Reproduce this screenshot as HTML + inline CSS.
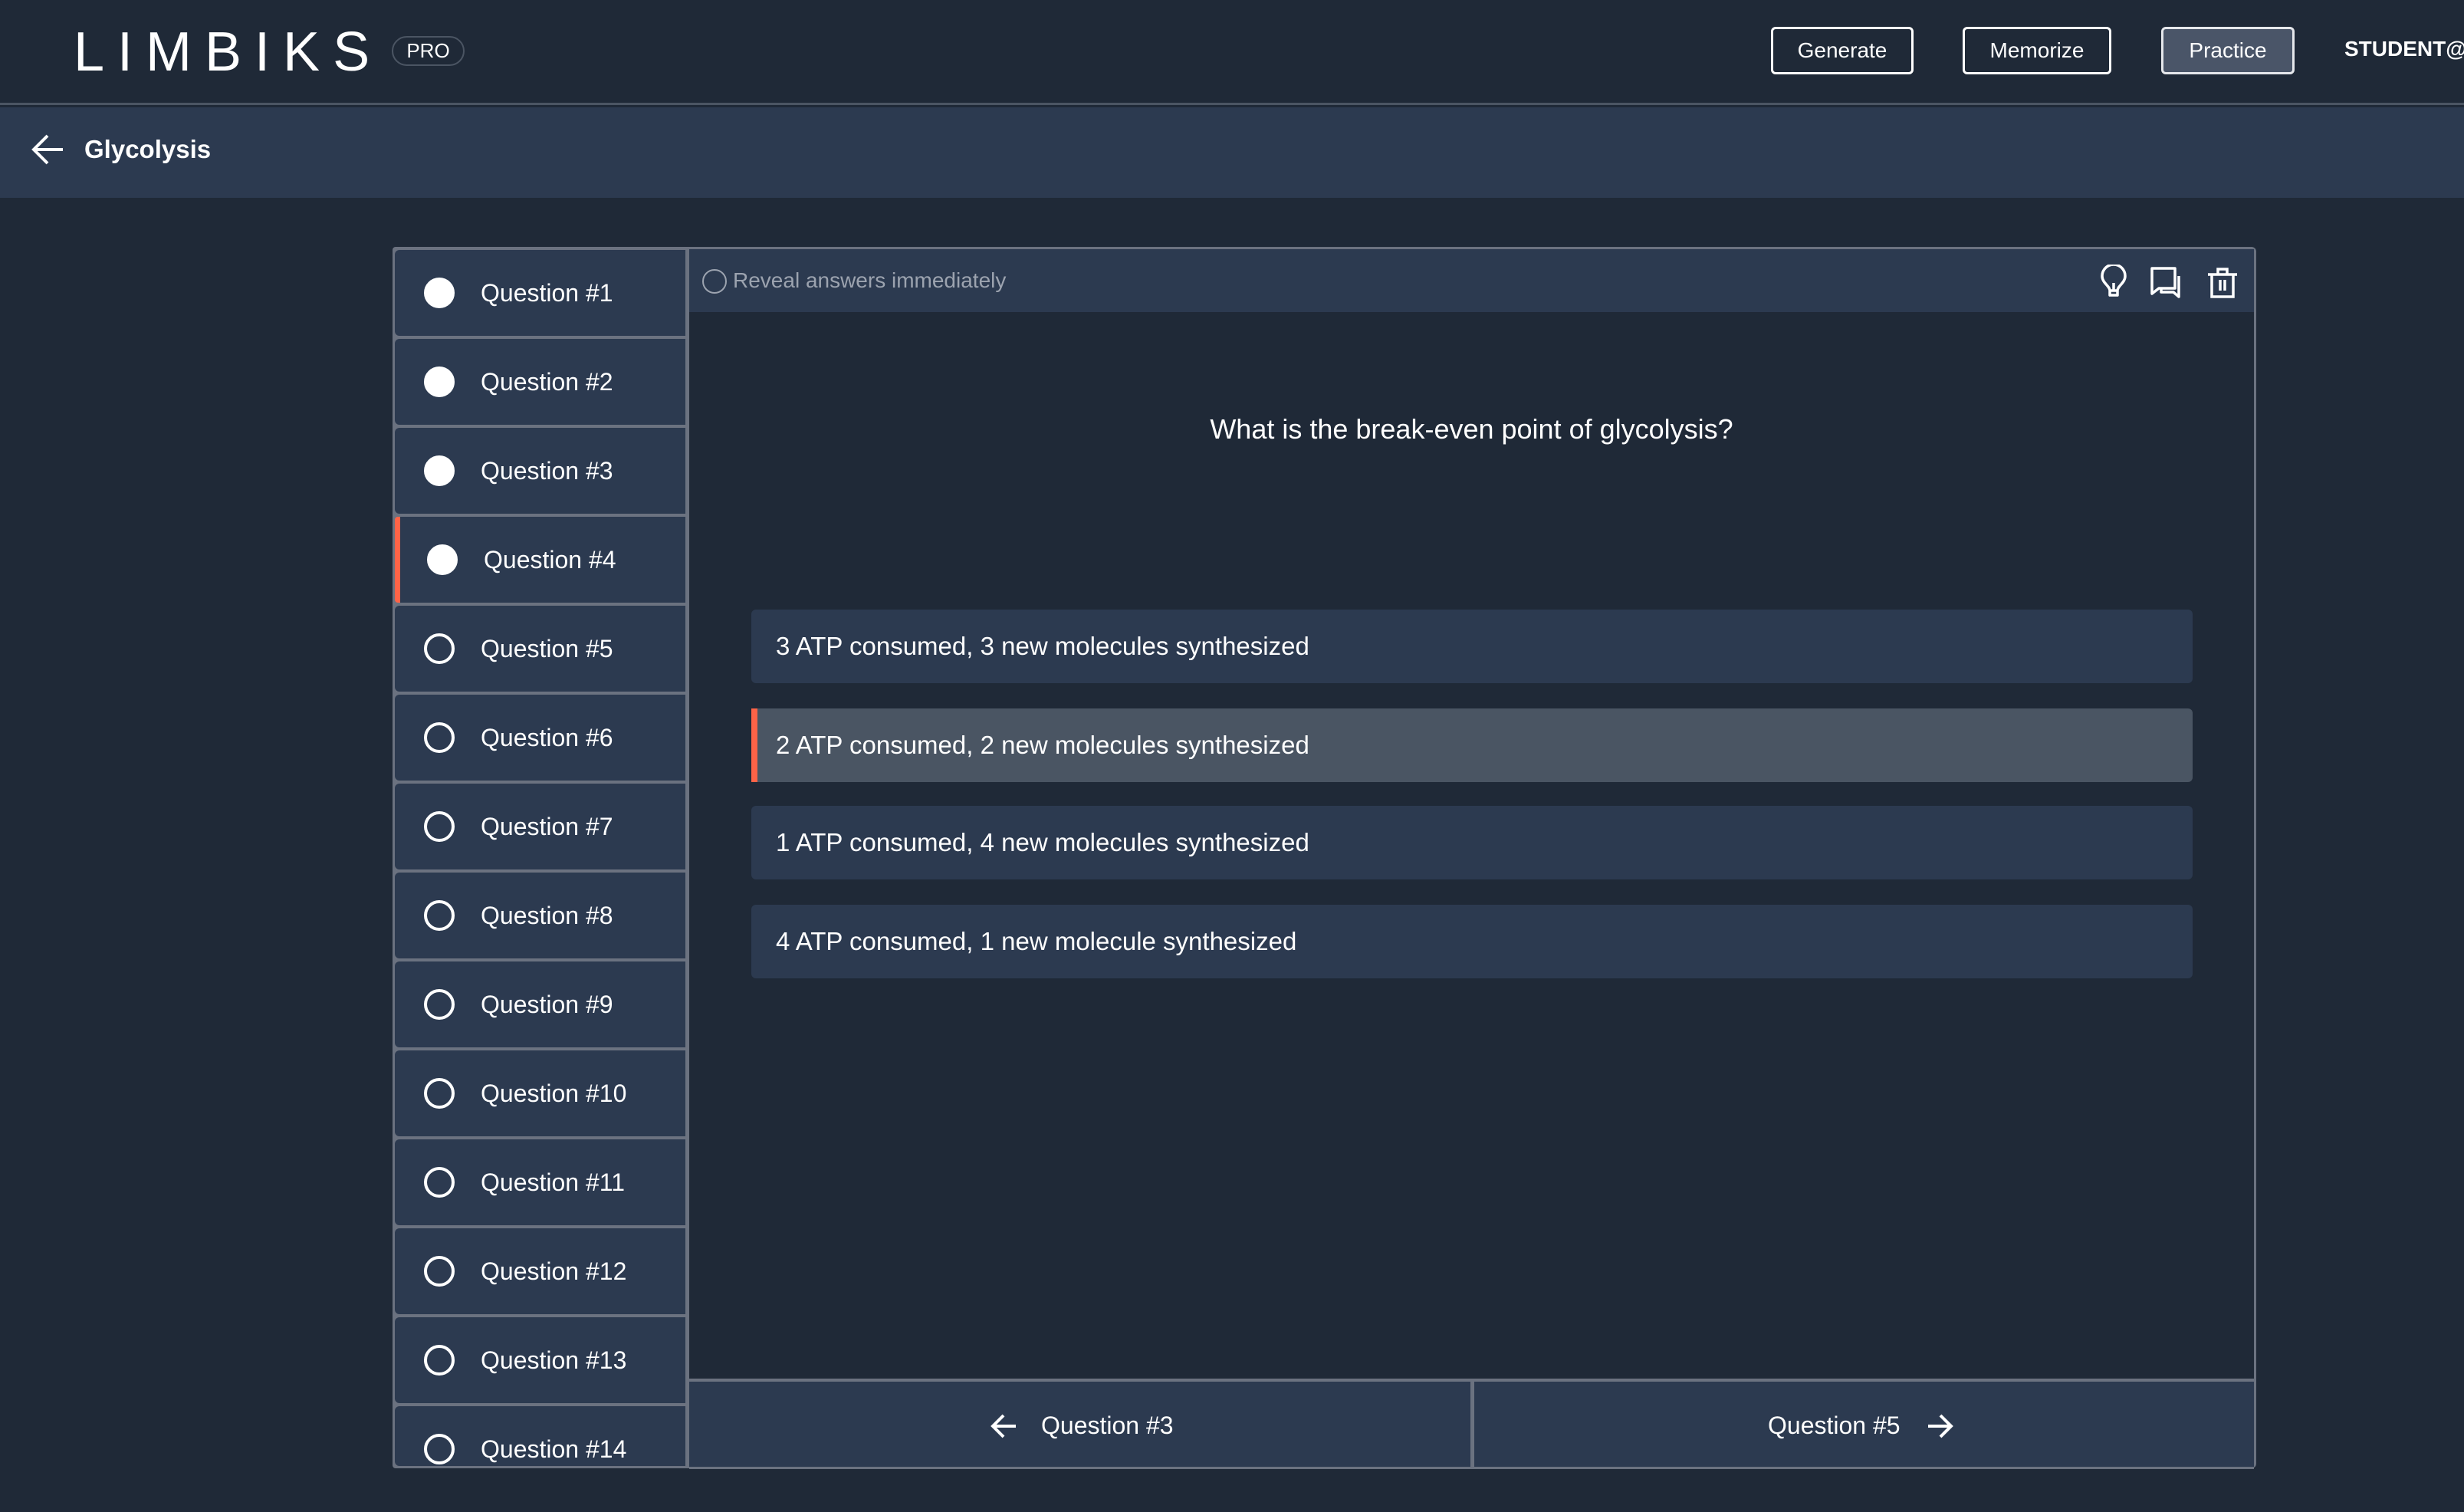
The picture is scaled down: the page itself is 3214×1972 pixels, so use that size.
<!DOCTYPE html>
<html><head><meta charset="utf-8"><style>
*{margin:0;padding:0;box-sizing:border-box}
body{width:3214px;height:1972px;background:#1f2937;font-family:"Liberation Sans",sans-serif;color:#fff;position:relative;overflow:hidden}
.a{position:absolute}
.hdr{left:0;top:0;width:3214px;height:137px;background:#1f2937;border-bottom:3px solid #4b5563}
.sub{left:0;top:140px;width:3214px;height:118px;background:#2c3a50}
.btn{position:absolute;top:35px;height:62px;border:3px solid #fff;border-radius:6px;font-size:28px;display:flex;align-items:center;justify-content:center}
.side{left:512px;top:322px;width:387px;height:1593px;background:#6b7280;overflow:hidden;border-radius:4px 0 0 4px}
.it{position:absolute;left:3px;width:379px;height:112px;background:#2c3a50;border-radius:6px 0 0 6px}
.it .c{position:absolute;left:38px;top:36px;width:40px;height:40px;border-radius:50%;border:4px solid #fff}
.it .c.f{background:#fff}
.it span{position:absolute;left:112px;top:38px;font-size:32px;line-height:36px}
.main{left:899px;top:322px;width:2044px;height:1593px;border:3px solid #6b7280;border-left:none;border-radius:0 6px 6px 0;background:#1f2937}
.ans{position:absolute;left:81px;width:1880px;height:96px;background:#2c3a50;border-radius:6px;font-size:33px;line-height:96px;padding-left:32px}
</style></head><body>
<div class="a hdr"></div>
<div class="a" style="left:96px;top:30px;font-size:72px;line-height:76px;letter-spacing:17px;font-weight:300">LIMBIKS</div>
<div class="a" style="left:511px;top:47px;width:95px;height:39px;border:2px solid #4b5563;border-radius:20px;font-size:26px;line-height:35px;text-align:center">PRO</div>
<div class="btn" style="left:2310px;width:186px">Generate</div>
<div class="btn" style="left:2560px;width:194px">Memorize</div>
<div class="btn" style="left:2819px;width:174px;background:#4a5568;border-color:#e5e7eb">Practice</div>
<div class="a" style="left:3058px;top:48px;font-size:28px;font-weight:bold;white-space:nowrap">STUDENT@</div>
<div class="a sub"></div>
<svg class="a" style="left:40px;top:174px" width="44" height="42" viewBox="0 0 44 42"><path d="M42 21H4M22 3L4 21l18 18" fill="none" stroke="#fff" stroke-width="4"/></svg>
<div class="a" style="left:110px;top:176px;font-size:33px;font-weight:bold">Glycolysis</div>

<div class="a side">
<div class="it" style="top:4px"><div class="c f"></div><span>Question #1</span></div>
<div class="it" style="top:120px"><div class="c f"></div><span>Question #2</span></div>
<div class="it" style="top:236px"><div class="c f"></div><span>Question #3</span></div>
<div class="it" style="top:352px;border-left:7px solid #ff6347;border-radius:4px 0 0 4px"><div class="c f" style="left:35px"></div><span style="left:109px">Question #4</span></div>
<div class="it" style="top:468px"><div class="c"></div><span>Question #5</span></div>
<div class="it" style="top:584px"><div class="c"></div><span>Question #6</span></div>
<div class="it" style="top:700px"><div class="c"></div><span>Question #7</span></div>
<div class="it" style="top:816px"><div class="c"></div><span>Question #8</span></div>
<div class="it" style="top:932px"><div class="c"></div><span>Question #9</span></div>
<div class="it" style="top:1048px"><div class="c"></div><span>Question #10</span></div>
<div class="it" style="top:1164px"><div class="c"></div><span>Question #11</span></div>
<div class="it" style="top:1280px"><div class="c"></div><span>Question #12</span></div>
<div class="it" style="top:1396px"><div class="c"></div><span>Question #13</span></div>
<div class="it" style="top:1512px;height:78px"><div class="c"></div><span>Question #14</span></div>
</div>

<div class="a main">
<div class="a" style="left:0;top:0;width:2041px;height:82px;background:#2c3a50"></div>
<div class="a" style="left:17px;top:26px;width:32px;height:32px;border:2px solid #9ca3af;border-radius:50%"></div>
<div class="a" style="left:57px;top:25px;font-size:28px;color:#9ca3af">Reveal answers immediately</div>
<svg class="a" style="left:1838px;top:20px" width="40" height="46" viewBox="0 0 40 46"><path d="M14 40h12M15 34h10v6H15zM20 34v-10M15 34c0-6-10-10-10-19a15 15 0 0130 0c0 9-10 13-10 19" fill="none" stroke="#fff" stroke-width="3.5" stroke-linejoin="round"/></svg>
<svg class="a" style="left:1905px;top:22px" width="46" height="44" viewBox="0 0 46 44"><path d="M3 3h30v26H12l-9 7z" fill="none" stroke="#fff" stroke-width="3.5" stroke-linejoin="round"/><path d="M38 13v27l-7-6H15v-5" fill="none" stroke="#fff" stroke-width="3.5" stroke-linejoin="round"/></svg>
<svg class="a" style="left:1979px;top:24px" width="42" height="40" viewBox="0 0 42 40"><path d="M2 9h38M15 9V2h12v7M7 9v29h28V9M18 16v14M24 16v14" fill="none" stroke="#fff" stroke-width="3.5"/></svg>
<div class="a" style="left:0;top:214px;width:2041px;text-align:center;font-size:36px">What is the break-even point of glycolysis?</div>
<div class="ans" style="top:470px">3 ATP consumed, 3 new molecules synthesized</div>
<div class="ans" style="top:599px;background:#4a5563;border-left:8px solid #ff6347;border-radius:0 6px 6px 0;padding-left:24px">2 ATP consumed, 2 new molecules synthesized</div>
<div class="ans" style="top:726px">1 ATP consumed, 4 new molecules synthesized</div>
<div class="ans" style="top:855px">4 ATP consumed, 1 new molecule synthesized</div>
<div class="a" style="left:0;top:1473px;width:2041px;height:118px;background:#6b7280"></div>
<div class="a" style="left:0;top:1477px;width:1019px;height:111px;background:#2c3a50"></div>
<div class="a" style="left:1024px;top:1477px;width:1017px;height:111px;background:#2c3a50"></div>
<svg class="a" style="left:392px;top:1517px" width="36" height="36" viewBox="0 0 36 36"><path d="M34 18H4M18 4L4 18l14 14" fill="none" stroke="#fff" stroke-width="4"/></svg>
<div class="a" style="left:459px;top:1516px;font-size:32px">Question #3</div>
<div class="a" style="left:1407px;top:1516px;font-size:32px">Question #5</div>
<svg class="a" style="left:1614px;top:1517px" width="36" height="36" viewBox="0 0 36 36"><path d="M2 18h30M18 4l14 14-14 14" fill="none" stroke="#fff" stroke-width="4"/></svg>
</div>
</body></html>
